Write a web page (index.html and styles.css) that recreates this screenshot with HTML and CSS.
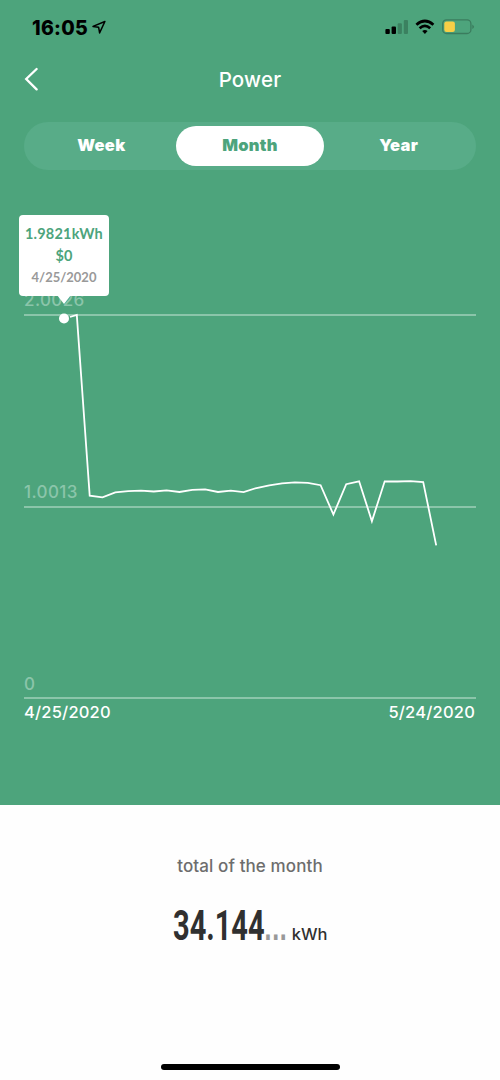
FILE: index.html
```html
<!DOCTYPE html>
<html lang="en">
<head>
    <meta charset="UTF-8">
    <meta name="viewport" content="width=device-width, initial-scale=1.0">
    <title>Power</title>
    <link rel="stylesheet" href="styles.css">
</head>
<body>
    <main class="panel">
        <div class="status-bar">
            <div class="clock">
                <span class="time">16:05</span>
                <svg class="location" width="14" height="14" viewBox="0 0 14 14">
                    <path d="M12.9 1.5L1 6.4L6.6 7.2L7.6 12.9Z" fill="none" stroke="#000" stroke-width="1.5" stroke-linejoin="round"/>
                </svg>
            </div>
            <svg width="90" height="16" viewBox="0 0 90 16">
                <!-- signal -->
                <rect x="0.4" y="10" width="4.4" height="5" rx="1"/>
                <rect x="6.6" y="7.4" width="4.4" height="7.6" rx="1"/>
                <rect x="12.7" y="4.2" width="4.2" height="10.8" rx="1" fill="#3b8160"/>
                <rect x="18.8" y="1" width="4.2" height="14" rx="1" fill="#3b8160"/>
                <!-- wifi -->
                <g fill="none" stroke="#000" stroke-width="2.8">
                    <path d="M31.4 5.7Q39.9 -1.7 48.4 5.7"/>
                    <path d="M34.6 9.2Q39.9 4.6 45.2 9.2"/>
                </g>
                <path d="M37.2 12.1Q39.9 9.9 42.6 12.1L39.9 15Z"/>
                <!-- battery -->
                <rect x="57.7" y="0.9" width="28.2" height="13.6" rx="3.8" fill="none" stroke="#3b7c5e" stroke-width="1.3"/>
                <rect x="59.3" y="2.4" width="10.6" height="10.6" rx="2.2" fill="#f7cf46"/>
                <path d="M87.3 5.4Q90.7 7.7 87.3 10Z" fill="#3b7c5e"/>
            </svg>
        </div>

        <header class="header">
            <svg class="back" width="16" height="24" viewBox="0 0 16 24">
                <path d="M12.6 2L2.2 12L12.6 22.4" fill="none" stroke="#fff" stroke-width="2.3" stroke-linecap="round"/>
            </svg>
            <h1>Power</h1>
        </header>

        <nav class="tabs">
            <button class="tab">Week</button>
            <button class="tab active">Month</button>
            <button class="tab">Year</button>
        </nav>

        <section class="chart">
            <div class="grid-row"><span>2.0026</span></div>
            <div class="grid-row"><span>1.0013</span></div>
            <div class="grid-row"><span>0</span></div>
            <svg class="line" width="452" height="400" viewBox="24 300 452 400">
                <polyline points="70,317 76.8,315 89.7,495.6 102.5,497.3 115.3,492.4 128.2,491.1 141,490.6 153.8,491.5 166.6,490.4 179.5,492 192.3,489.8 205.1,489.4 218,492 230.8,490.7 243.6,492.2 256.5,488 269.3,485.3 282.1,483.4 294.9,482.4 307.8,482.9 320.6,485.2 333.4,514.5 346.2,484.2 359.1,481.3 371.9,521.2 384.7,481.3 397.6,481.5 410.4,481.2 423.2,482 436.2,545.4"/>
                <circle cx="64" cy="318.5" r="5"/>
            </svg>
            <div class="tooltip">
                <div class="power">1.9821kWh</div>
                <div class="cost">$0</div>
                <div class="date">4/25/2020</div>
            </div>
        </section>
        <div class="dates">
            <span>4/25/2020</span>
            <span>5/24/2020</span>
        </div>
    </main>

    <footer class="total">
        <p class="caption">total of the month</p>
        <div class="amount">
            <span class="number">34.144<span class="more">...</span></span>
            <span class="unit">kWh</span>
        </div>
        <div class="home-bar"></div>
    </footer>
</body>
</html>
```

FILE: styles.css
```css
* {
    box-sizing: border-box;
}
body {
    margin: 0;
    height: 1080px;
    display: flex;
    flex-direction: column;
    font-family: Inter, "Liberation Sans", sans-serif;
    background: #fefefe;
    overflow: hidden;
}
.panel {
    height: 805px;
    flex: none;
    background: #4da47c;
    color: #fff;
}
.status-bar {
    height: 54px;
    padding: 0 25px 0 32px;
    display: flex;
    align-items: center;
    justify-content: space-between;
    color: #000;
}
.clock {
    display: flex;
    align-items: center;
    gap: 4px;
}
.time {
    padding-top: 1px;
    font-size: 19.5px;
    font-weight: 800;
    line-height: 24px;
    letter-spacing: 0.3px;
}
.header {
    height: 50px;
    padding: 0 24px;
    display: grid;
    grid-template-columns: 16px 1fr 16px;
    align-items: center;
}
.header h1 {
    margin: 0;
    font-size: 20.5px;
    font-weight: 500;
    letter-spacing: 0.2px;
    text-align: center;
}
.tabs {
    height: 48px;
    margin: 18px 24px 0;
    padding: 4px 3px;
    display: flex;
    border-radius: 24px;
    background: #58ac88;
}
.tab {
    flex: 1;
    border: 0;
    padding: 0 0 2px;
    border-radius: 20px;
    background: none;
    color: #fff;
    font-family: inherit;
    font-size: 16.5px;
    font-weight: 900;
    letter-spacing: 0.3px;
}
.tab.active {
    background: #fff;
    color: #4da47c;
}
.chart {
    position: relative;
    margin: 0 24px;
    padding-top: 110px;
}
.grid-row {
    height: 192px;
    display: flex;
    align-items: flex-end;
    padding-bottom: 4px;
    border-bottom: 2px solid #8bc5aa;
    color: #8bc5aa;
    font-size: 17px;
    font-weight: 500;
    line-height: 20px;
    letter-spacing: 0.4px;
}
.grid-row:first-child {
    height: 36px;
}
.grid-row:nth-child(3) {
    height: 191px;
    padding-bottom: 3px;
}
.line {
    position: absolute;
    left: 0;
    top: 130px;
}
.line polyline {
    fill: none;
    stroke: #fff;
    stroke-width: 1.8;
}
.line circle {
    fill: #fff;
}
.tooltip {
    position: absolute;
    left: -5px;
    top: 45px;
    width: 90px;
    height: 81px;
    padding-top: 8px;
    border-radius: 4px;
    background: #fff;
    color: #4da47c;
    font-family: Lato, sans-serif;
    font-size: 14.5px;
    font-weight: 700;
    line-height: 22px;
    letter-spacing: 0.2px;
    text-align: center;
    white-space: nowrap;
}
.tooltip::after {
    content: "";
    position: absolute;
    left: 38px;
    top: 80px;
    border: 7px solid transparent;
    border-top: 9px solid #fff;
    border-bottom: 0;
}
.tooltip .date {
    color: #999;
    font-size: 13px;
    line-height: 21px;
    letter-spacing: 0;
}
.dates {
    padding: 3px 25px 0 24px;
    display: flex;
    justify-content: space-between;
    font-size: 16.5px;
    font-weight: 500;
    line-height: 20px;
    letter-spacing: 0.2px;
}
.total {
    flex: 1;
    padding: 51px 0 10px;
    display: flex;
    flex-direction: column;
    align-items: center;
}
.caption {
    margin: 0;
    color: #6d6d6d;
    font-size: 17px;
    font-weight: 500;
    line-height: 20px;
    letter-spacing: 0.1px;
}
.amount {
    width: 155px;
    margin-top: 25px;
    display: flex;
    align-items: baseline;
    justify-content: space-between;
    color: #303030;
}
/* condensed numerals */
.number {
    width: 115px;
    font-family: Roboto, sans-serif;
    font-size: 42px;
    font-weight: 700;
    line-height: 50px;
    transform: scaleX(0.69);
    transform-origin: left;
}
.more {
    color: #999;
    font-family: "Liberation Sans", sans-serif;
    font-size: 36px;
    letter-spacing: 1px;
    line-height: 1;
}
.unit {
    font-size: 16.5px;
    font-weight: 500;
}
.home-bar {
    width: 179px;
    height: 6px;
    margin-top: auto;
    border-radius: 3px;
    background: #000;
}
```
